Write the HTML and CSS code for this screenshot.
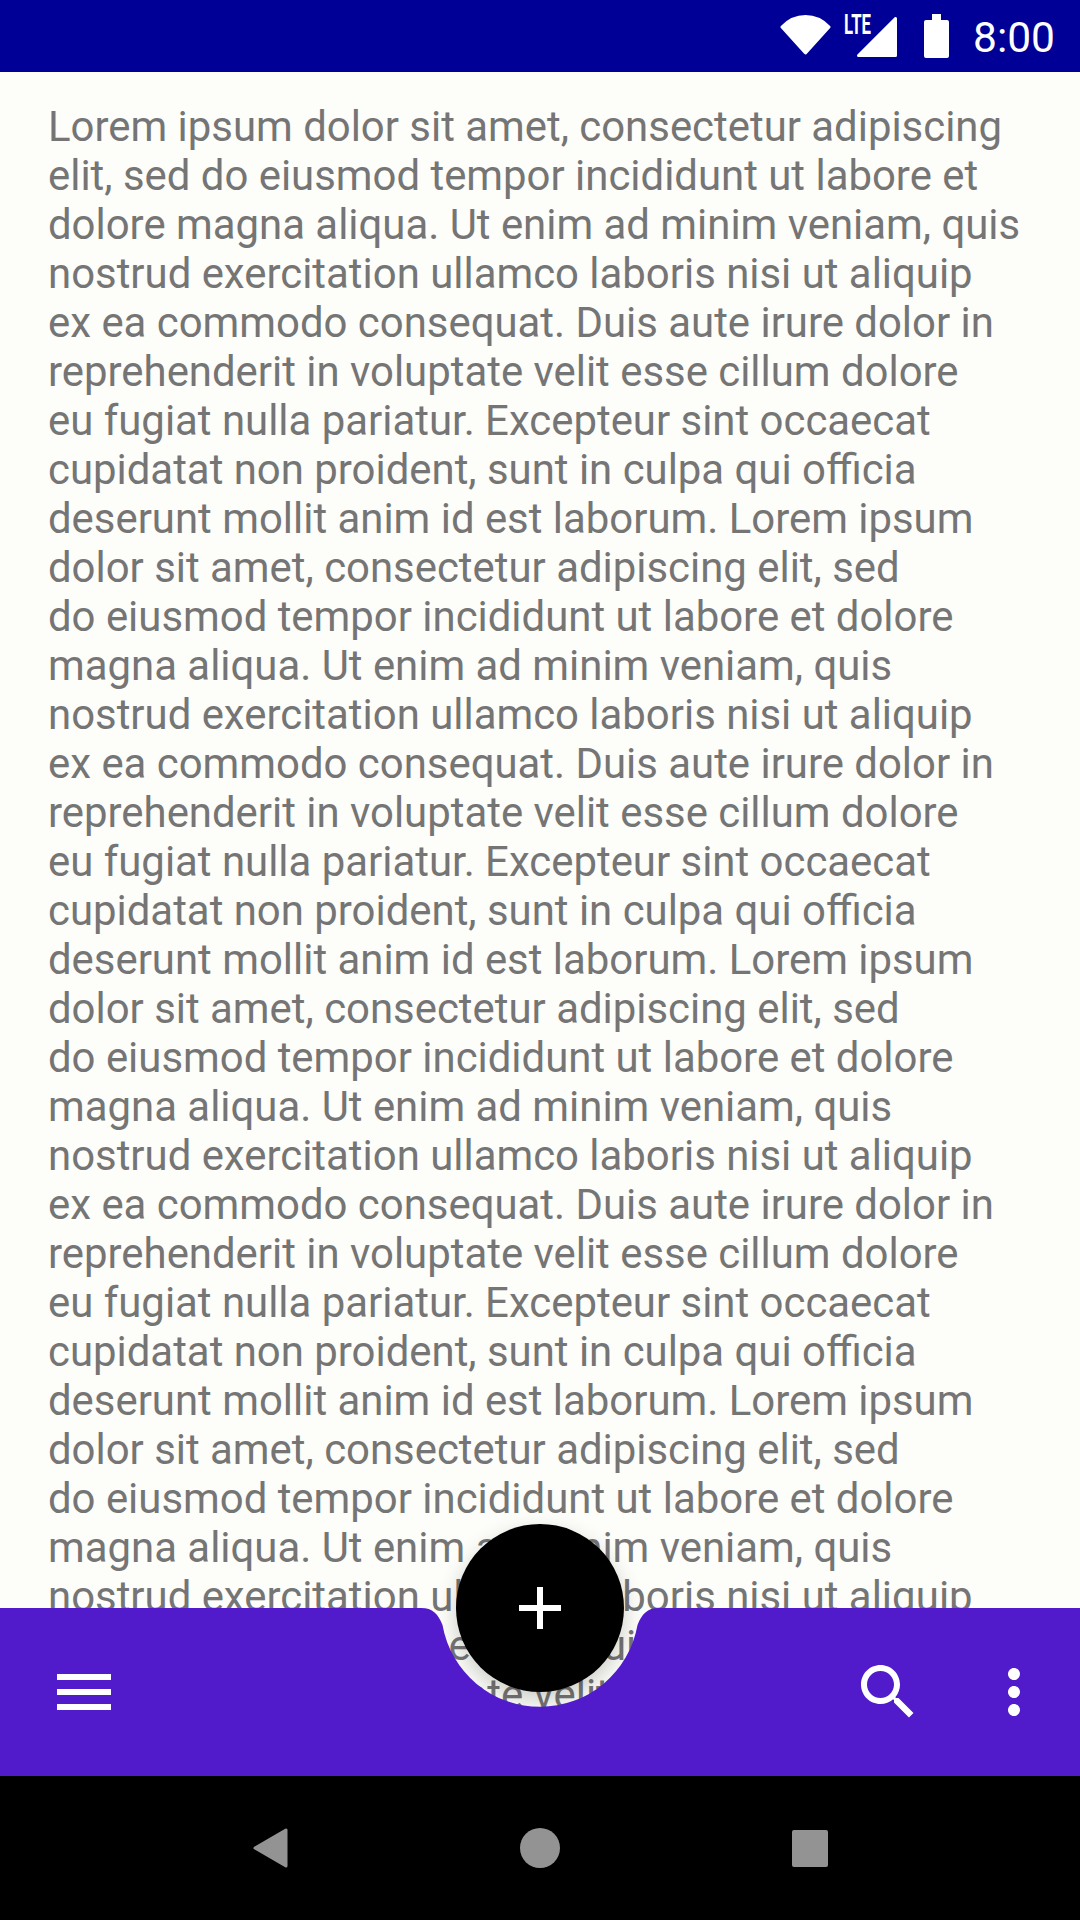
FILE: index.html
```html
<!DOCTYPE html>
<html lang="en">
<head>
    <meta charset="UTF-8">
    <meta name="viewport" content="width=device-width, initial-scale=1.0">
    <title>Bottom App Bar</title>
    <link rel="stylesheet" href="styles.css">
</head>
<body>
<div class="screen">

    <!-- Status bar -->
    <header class="status-bar">
        <svg class="wifi-icon" viewBox="0 0 51 41" width="51" height="41">
            <path d="M2 13 C15 -1 36 -1 49 13 L25.5 39 Z" fill="#fff" stroke="#fff" stroke-width="3" stroke-linejoin="round"/>
        </svg>
        <div class="signal">
            <span class="lte">LTE</span>
            <svg class="signal-icon" viewBox="0 0 40 40" width="40" height="40">
                <path d="M1.5 38.5 L38.5 1.5 V38.5 Z" fill="#fff" stroke="#fff" stroke-width="3" stroke-linejoin="round"/>
            </svg>
        </div>
        <svg class="battery-icon" viewBox="0 0 25 44" width="25" height="44">
            <path d="M8 0 H17 V6 H23 Q25 6 25 8 V42 Q25 44 23 44 H2 Q0 44 0 42 V8 Q0 6 2 6 H8 Z" fill="#fff"/>
        </svg>
        <span class="clock">8:00</span>
    </header>

    <!-- Scrolling content, runs on behind the bar -->
    <main class="content">
        <p class="lorem">
            Lorem ipsum dolor sit amet, consectetur adipiscing<br>
            elit, sed do eiusmod tempor incididunt ut labore et<br>
            dolore magna aliqua. Ut enim ad minim veniam, quis<br>
            nostrud exercitation ullamco laboris nisi ut aliquip<br>
            ex ea commodo consequat. Duis aute irure dolor in<br>
            reprehenderit in voluptate velit esse cillum dolore<br>
            eu fugiat nulla pariatur. Excepteur sint occaecat<br>
            cupidatat non proident, sunt in culpa qui officia<br>
            deserunt mollit anim id est laborum. Lorem ipsum<br>
            dolor sit amet, consectetur adipiscing elit, sed<br>
            do eiusmod tempor incididunt ut labore et dolore<br>
            magna aliqua. Ut enim ad minim veniam, quis<br>
            nostrud exercitation ullamco laboris nisi ut aliquip<br>
            ex ea commodo consequat. Duis aute irure dolor in<br>
            reprehenderit in voluptate velit esse cillum dolore<br>
            eu fugiat nulla pariatur. Excepteur sint occaecat<br>
            cupidatat non proident, sunt in culpa qui officia<br>
            deserunt mollit anim id est laborum. Lorem ipsum<br>
            dolor sit amet, consectetur adipiscing elit, sed<br>
            do eiusmod tempor incididunt ut labore et dolore<br>
            magna aliqua. Ut enim ad minim veniam, quis<br>
            nostrud exercitation ullamco laboris nisi ut aliquip<br>
            ex ea commodo consequat. Duis aute irure dolor in<br>
            reprehenderit in voluptate velit esse cillum dolore<br>
            eu fugiat nulla pariatur. Excepteur sint occaecat<br>
            cupidatat non proident, sunt in culpa qui officia<br>
            deserunt mollit anim id est laborum. Lorem ipsum<br>
            dolor sit amet, consectetur adipiscing elit, sed<br>
            do eiusmod tempor incididunt ut labore et dolore<br>
            magna aliqua. Ut enim ad minim veniam, quis<br>
            nostrud exercitation ullamco laboris nisi ut aliquip<br>
            ex ea commodo consequat. Duis aute irure dolor in<br>
            reprehenderit in voluptate velit esse cillum dolore
        </p>

        <!-- Bottom app bar with cradle -->
        <div class="fab-shadow"></div>
        <div class="app-bar">
            <svg class="app-bar-shape" viewBox="0 0 1080 168" width="1080" height="168">
                <path d="M0 0 H421 C433 0 438 6 442.5 17 A99 99 0 0 0 637.5 17 C642 6 647 0 659 0 H1080 V168 H0 Z" fill="#511bcb"/>
            </svg>
            <svg class="bar-icon" viewBox="0 0 24 24" width="72" height="72">
                <path d="M3 18h18v-2H3v2zm0-5h18v-2H3v2zm0-7v2h18V6H3z" fill="#fff"/>
            </svg>
            <div class="bar-actions">
                <svg class="bar-icon" viewBox="0 0 24 24" width="72" height="72">
                    <path d="M15.5 14h-.79l-.28-.27C15.41 12.59 16 11.11 16 9.5 16 5.91 13.09 3 9.5 3S3 5.91 3 9.5 5.91 16 9.5 16c1.61 0 3.09-.59 4.23-1.57l.27.28v.79l5 4.99L20.49 19l-4.99-5zm-6 0C7.01 14 5 11.99 5 9.5S7.01 5 9.5 5 14 7.01 14 9.5 11.99 14 9.5 14z" fill="#fff"/>
                </svg>
                <svg class="bar-icon" viewBox="0 0 24 24" width="72" height="72">
                    <path d="M12 8c1.1 0 2-.9 2-2s-.9-2-2-2-2 .9-2 2 .9 2 2 2zm0 2c-1.1 0-2 .9-2 2s.9 2 2 2 2-.9 2-2-.9-2-2-2zm0 6c-1.1 0-2 .9-2 2s.9 2 2 2 2-.9 2-2-.9-2-2-2z" fill="#fff"/>
                </svg>
            </div>
        </div>
        <button class="fab" type="button">
            <svg viewBox="0 0 42 42" width="42" height="42">
                <path d="M18 0 H24 V18 H42 V24 H24 V42 H18 V24 H0 V18 H18 Z" fill="#fff"/>
            </svg>
        </button>
    </main>

    <!-- Navigation bar -->
    <nav class="nav-bar">
        <div class="nav-item">
            <svg viewBox="0 0 35 40" width="35" height="40">
                <path d="M2 20 L33 2 V38 Z" fill="#939393" stroke="#939393" stroke-width="3" stroke-linejoin="round"/>
            </svg>
        </div>
        <div class="nav-item"><div class="nav-home"></div></div>
        <div class="nav-item"><div class="nav-recent"></div></div>
    </nav>

</div>
</body>
</html>
```

FILE: styles.css
```css
body {
    margin: 0;
    font-family: 'Roboto', sans-serif;
    background-color: #fdfdfa;
}

.screen {
    width: 1080px;
    height: 1920px;
    display: flex;
    flex-direction: column;
    overflow: hidden;
}

.status-bar {
    height: 72px;
    flex: none;
    display: flex;
    align-items: center;
    padding-right: 25px;
    justify-content: flex-end;
    background-color: #000096;
    color: #fff;
}

.wifi-icon {
    margin-right: 13px;
    margin-top: -3px;
}

.signal {
    position: relative;
    width: 53px;
    height: 57px;
    margin-right: 27px;
}

.signal-icon {
    position: absolute;
    right: 0;
    bottom: 8px;
}

.lte {
    position: absolute;
    left: 0;
    top: 4px;
    font-size: 27px;
    font-weight: 700;
    line-height: 27px;
    transform: scaleX(0.62);
    transform-origin: left center;
}

.battery-icon {
    margin-right: 24px;
}

.clock {
    font-size: 42.5px;
    line-height: 48px;
    padding-top: 3px;
}

.content {
    flex: 1;
    position: relative;
    overflow: hidden;
}

.lorem {
    margin: 0;
    padding: 30px 0 0 48px;
    font-size: 41.9px;
    line-height: 49px;
    color: #757575;
    white-space: nowrap;
}

.app-bar {
    position: absolute;
    left: 0;
    right: 0;
    bottom: 0;
    height: 168px;
    display: flex;
    align-items: center;
    justify-content: space-between;
    padding: 0 30px 0 48px;
}

.app-bar-shape {
    position: absolute;
    left: 0;
    top: 0;
}

.bar-icon {
    position: relative;
    display: block;
}

.bar-actions {
    display: flex;
    gap: 54px;
}

.fab,
.fab-shadow {
    position: absolute;
    left: 456px;
    bottom: 84px;
    width: 168px;
    height: 168px;
    border-radius: 50%;
}

.fab {
    padding: 0;
    border: none;
    background-color: #000;
    display: flex;
    align-items: center;
    justify-content: center;
}

.fab-shadow {
    box-shadow: 0 8px 22px rgba(0, 0, 0, 0.2);
}

.nav-bar {
    height: 144px;
    flex: none;
    display: flex;
    justify-content: center;
    background-color: #000;
}

.nav-item {
    width: 270px;
    display: flex;
    align-items: center;
    justify-content: center;
}

.nav-item svg {
    display: block;
}

.nav-home {
    width: 40px;
    height: 40px;
    border-radius: 50%;
    background-color: #939393;
}

.nav-recent {
    width: 36px;
    height: 37px;
    border-radius: 2px;
    background-color: #939393;
}
```
